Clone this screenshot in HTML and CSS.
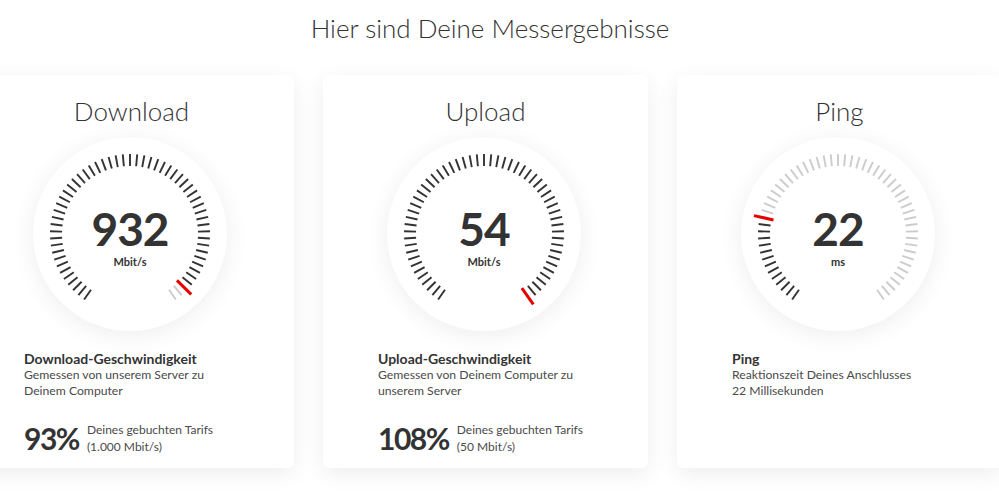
FILE: index.html
```html
<!DOCTYPE html>
<html lang="de">
<head>
    <meta charset="UTF-8">
    <meta name="viewport" content="width=device-width, initial-scale=1.0">
    <title>Messergebnisse</title>
    <link rel="stylesheet" href="styles.css">
</head>
<body>
    <h1 class="page-title">Hier sind Deine Messergebnisse</h1>
    <div class="results">
        <div class="card">
            <h2>Download</h2>
            <div class="gauge" data-value="0.965">
                <svg class="ticks" viewBox="0 0 194 194"></svg>
                <div class="reading">
                    <span class="num">932</span>
                    <span class="unit">Mbit/s</span>
                </div>
            </div>
            <div class="details">
                <h3>Download-Geschwindigkeit</h3>
                <p>Gemessen von unserem Server zu<br>Deinem Computer</p>
            </div>
            <div class="tariff">
                <span class="percent">93%</span>
                <span class="tariff-text">Deines gebuchten Tarifs<br>(1.000 Mbit/s)</span>
            </div>
        </div>
        <div class="card">
            <h2>Upload</h2>
            <div class="gauge" data-value="1">
                <svg class="ticks" viewBox="0 0 194 194"></svg>
                <div class="reading">
                    <span class="num">54</span>
                    <span class="unit">Mbit/s</span>
                </div>
            </div>
            <div class="details">
                <h3>Upload-Geschwindigkeit</h3>
                <p>Gemessen von Deinem Computer zu<br>unserem Server</p>
            </div>
            <div class="tariff">
                <span class="percent">108%</span>
                <span class="tariff-text">Deines gebuchten Tarifs<br>(50 Mbit/s)</span>
            </div>
        </div>
        <div class="card">
            <h2>Ping</h2>
            <div class="gauge" data-value="0.23">
                <svg class="ticks" viewBox="0 0 194 194"></svg>
                <div class="reading">
                    <span class="num">22</span>
                    <span class="unit">ms</span>
                </div>
            </div>
            <div class="details">
                <h3>Ping</h3>
                <p>Reaktionszeit Deines Anschlusses<br>22 Millisekunden</p>
            </div>
        </div>
    </div>
    <script>
        // Skala: 290 Grad, Luecke unten
        const STEPS = 56;
        const NS = "http://www.w3.org/2000/svg";

        function tick(svg, deg, r1, r2, color, width) {
            const a = deg * Math.PI / 180;
            const line = document.createElementNS(NS, "line");
            line.setAttribute("x1", (97 - Math.sin(a) * r1).toFixed(2));
            line.setAttribute("y1", (97 + Math.cos(a) * r1).toFixed(2));
            line.setAttribute("x2", (97 - Math.sin(a) * r2).toFixed(2));
            line.setAttribute("y2", (97 + Math.cos(a) * r2).toFixed(2));
            line.setAttribute("stroke", color);
            line.setAttribute("stroke-width", width);
            svg.appendChild(line);
        }

        document.querySelectorAll(".gauge").forEach(gauge => {
            const svg = gauge.querySelector(".ticks");
            const value = parseFloat(gauge.dataset.value);
            const current = Math.round(value * STEPS);
            for (let i = 0; i <= STEPS; i++) {
                const deg = 35 + i * 290 / STEPS;
                if (i === current) {
                    tick(svg, deg, 66, 86, "#e60000", 3);
                } else {
                    tick(svg, deg, 68, 80, i < current ? "#333" : "#ccc", 1.9);
                }
            }
        });
    </script>
</body>
</html>
```

FILE: styles.css
```css
body {
    margin: 0;
    background-color: #fff;
    font-family: Lato, "Open Sans", sans-serif;
    color: #333;
    overflow-x: hidden;
}

.page-title {
    margin: 10px 0 0;
    padding-right: 19px;
    font-size: 26px;
    line-height: 36px;
    font-weight: 300;
    text-align: center;
    color: #333;
}

.results {
    display: flex;
    gap: 29px;
    margin: 29px 0 0 -31px;
    padding-bottom: 26px;
}

.card {
    flex: 0 0 325px;
    height: 393px;
    box-sizing: border-box;
    padding: 18px 20px 0 55px;
    background-color: #fff;
    border-radius: 6px;
    box-shadow: 0 6px 22px rgba(0, 0, 0, 0.07);
}

.card h2 {
    margin: 0 0 8px -35px;
    font-size: 26px;
    line-height: 36px;
    font-weight: 300;
    text-align: center;
}

.gauge {
    display: grid;
    width: 194px;
    height: 194px;
    margin-left: 9px;
    border-radius: 50%;
    background-color: #fff;
    box-shadow: 0 4px 24px rgba(0, 0, 0, 0.07);
}

.gauge .ticks,
.gauge .reading {
    grid-area: 1 / 1;
}

.ticks {
    width: 194px;
    height: 194px;
}

.reading {
    display: flex;
    flex-direction: column;
    align-items: center;
    justify-content: center;
}

.num {
    font-size: 46px;
    line-height: normal;
    font-weight: 700;
    letter-spacing: -1px;
    color: #333;
}

.unit {
    font-size: 11px;
    line-height: 12px;
    font-weight: 700;
    color: #333;
}

.details {
    margin-top: 20px;
}

.details h3 {
    margin: 0;
    font-size: 14px;
    line-height: 16px;
    font-weight: 700;
    color: #333;
}

.details p {
    margin: 0;
    font-size: 12.2px;
    line-height: 16px;
    color: #4a4a4a;
}

.tariff {
    display: flex;
    align-items: center;
    gap: 8px;
    margin-top: 22px;
}

.percent {
    font-size: 30px;
    line-height: 34px;
    font-weight: 700;
    letter-spacing: -1.5px;
    color: #333;
}

.tariff-text {
    font-size: 12px;
    line-height: 17px;
    color: #4a4a4a;
}
```
